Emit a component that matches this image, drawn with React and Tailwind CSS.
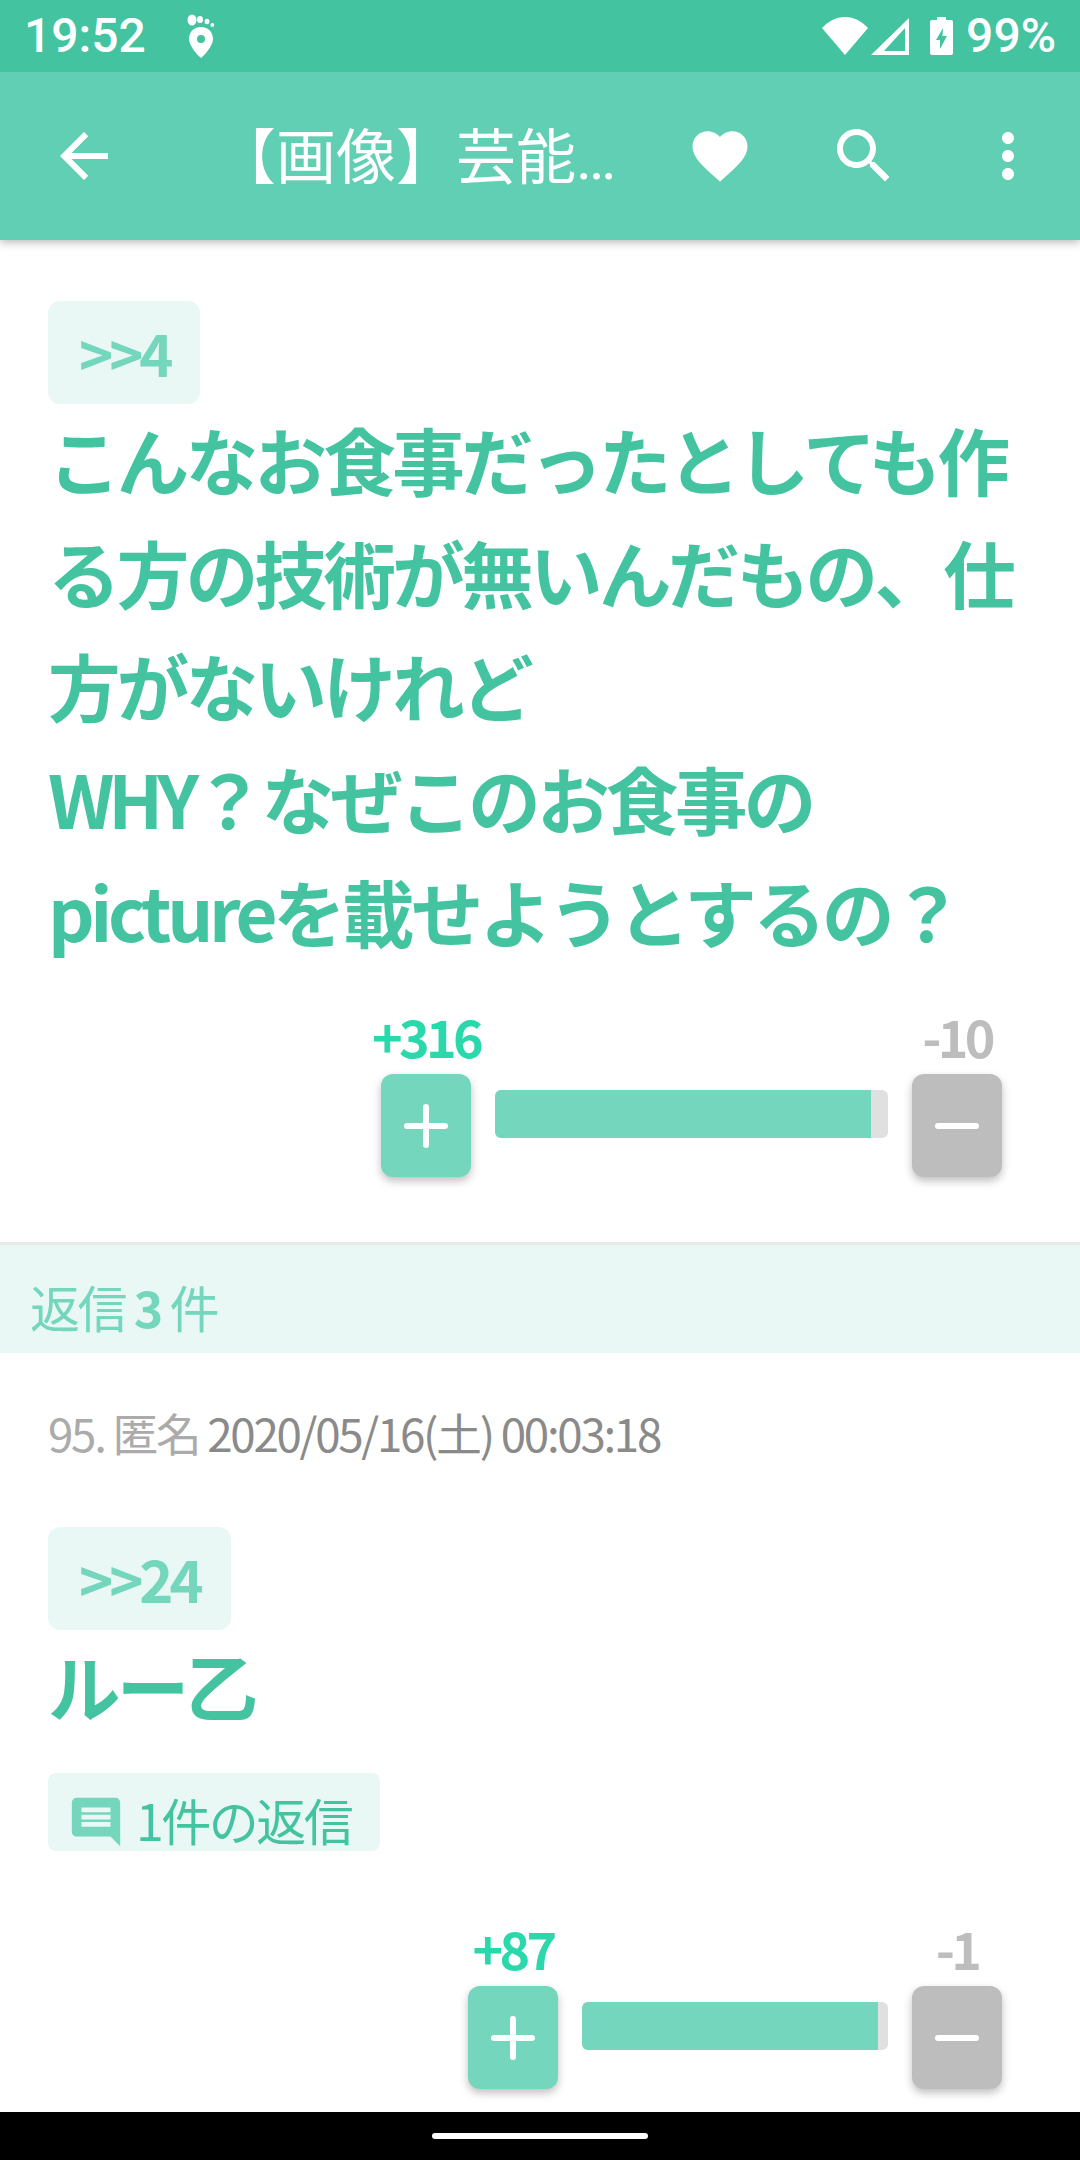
const JP = "font-['Noto_Sans_CJK_JP','Noto_Sans',sans-serif]";

function Badge({ children }) {
  return (
    <div className="inline-flex h-[103px] items-center rounded-xl bg-[#e9f8f4] px-[31px] pb-[2px] text-[58px] font-bold leading-none tracking-[-0.07em] text-[#73d6bd]">
      {children}
    </div>
  );
}

function PlusIcon() {
  return (
    <svg width="44" height="44" viewBox="0 0 44 44" stroke="white" strokeWidth="6" strokeLinecap="round">
      <path d="M3 22H41M22 3V41" />
    </svg>
  );
}

function MinusIcon() {
  return (
    <svg width="44" height="44" viewBox="0 0 44 44" stroke="white" strokeWidth="6" strokeLinecap="round">
      <path d="M3 22H41" />
    </svg>
  );
}

function Votes({ up, down, barWidth, fill, className }) {
  return (
    <div className={`flex justify-end gap-6 pr-[78px] ${className}`}>
      <div className="flex w-[90px] flex-col items-center">
        <div className="h-[62px] whitespace-nowrap text-[52px] font-bold leading-[48px] tracking-[-0.07em] text-[#2ad8ab]">{up}</div>
        <div className="flex h-[103px] w-[90px] items-center justify-center rounded-xl bg-[#73d6bd] shadow-[0_4px_8px_rgba(0,0,0,0.25)]">
          <PlusIcon />
        </div>
      </div>
      <div className="mt-[78px] h-12 overflow-hidden rounded-md bg-[#e0e0e0]" style={{ width: barWidth }}>
        <div className="h-full bg-[#73d6bd]" style={{ width: fill }} />
      </div>
      <div className="flex w-[90px] flex-col items-center">
        <div className="h-[62px] whitespace-nowrap text-[52px] font-bold leading-[48px] tracking-[-0.07em] text-[#bdbdbd]">{down}</div>
        <div className="flex h-[103px] w-[90px] items-center justify-center rounded-xl bg-[#bdbdbd] shadow-[0_4px_8px_rgba(0,0,0,0.25)]">
          <MinusIcon />
        </div>
      </div>
    </div>
  );
}

export default function App() {
  return (
    <div className={`flex h-[2160px] w-[1080px] flex-col overflow-hidden bg-white ${JP}`}>
      {/* status bar */}
      <div className="relative z-20 flex h-[72px] shrink-0 items-center bg-[#43c3a0] pl-[24px] pr-[24px] text-white">
        <span className="font-['Roboto'] text-[48px] font-medium leading-none">19:52</span>
        <svg className="ml-[41px]" width="28" height="44" viewBox="0 0 28 44" fill="white">
          <ellipse cx="5" cy="6" rx="4.5" ry="5.5" />
          <ellipse cx="13" cy="5.500" rx="3" ry="3.500" />
          <ellipse cx="20" cy="7.500" rx="2.400" ry="2.800" />
          <circle cx="25.300" cy="11" r="1.900" />
          <path fillRule="evenodd" d="M14 13C6.500 13 2 18.500 2 25c0 6 7 15 12 19 5-4 12-13 12-19 0-6.500-4.500-12-12-12zm0 8a4 4 0 110 8 4 4 0 010-8z" />
        </svg>
        <svg className="ml-auto" width="46" height="38" viewBox="0 0 46 38" fill="white">
          <path d="M0 11C6 4.500 14 0 23 0s17 4.500 23 11L23 38z" />
        </svg>
        <svg className="ml-[3px]" width="38" height="37" viewBox="0 0 38 37" fill="white">
          <path fillRule="evenodd" d="M38 0V37H0zM34 10 13 33H34z" />
        </svg>
        <svg className="ml-[21px]" width="23" height="38" viewBox="0 0 23 38" fill="white">
          <path fillRule="evenodd" d="M7 0h9v3h5a2 2 0 012 2v31a2 2 0 01-2 2H2a2 2 0 01-2-2V5a2 2 0 012-2h5zM13 11 6 23h4v9l7-13h-4.500z" />
        </svg>
        <span className="ml-[13px] font-['Roboto'] text-[48px] font-medium leading-none">99%</span>
      </div>

      {/* app bar */}
      <div className="relative z-10 flex h-[168px] shrink-0 items-center bg-[#60cfb3] pl-12 pr-9 shadow-[0_3px_8px_rgba(0,0,0,0.25)]">
        <svg width="72" height="72" viewBox="0 0 24 24" fill="white">
          <path d="M20 11H7.830l5.590-5.590L12 4l-8 8 8 8 1.410-1.410L7.830 13H20v-2z" />
        </svg>
        <div className="ml-[96px] flex-1 whitespace-nowrap text-[60px] leading-none text-white">
          【画像】芸能<span className="font-['Roboto']">…</span>
        </div>
        <svg width="66" height="66" viewBox="0 0 24 24" fill="white">
          <path d="M12 21.350l-1.450-1.320C5.400 15.360 2 12.280 2 8.500 2 5.420 4.420 3 7.500 3c1.740 0 3.410.81 4.500 2.090C13.090 3.810 14.760 3 16.500 3 19.580 3 22 5.420 22 8.500c0 3.780-3.400 6.860-8.550 11.540L12 21.350z" />
        </svg>
        <svg className="ml-[75px]" width="72" height="72" viewBox="0 0 24 24" fill="white">
          <path d="M15.500 14h-.79l-.28-.27C15.410 12.590 16 11.110 16 9.500 16 5.910 13.090 3 9.500 3S3 5.910 3 9.500 5.910 16 9.500 16c1.610 0 3.090-.59 4.230-1.570l.27.28v.79l5 4.990L20.490 19l-4.990-5zm-6 0C7.010 14 5 11.990 5 9.500S7.010 5 9.500 5 14 7.010 14 9.500 11.990 14 9.500 14z" />
        </svg>
        <svg className="ml-[72px]" width="72" height="72" viewBox="0 0 24 24" fill="white">
          <path d="M12 8c1.100 0 2-.9 2-2s-.9-2-2-2-2 .9-2 2 .9 2 2 2zm0 2c-1.100 0-2 .9-2 2s.9 2 2 2 2-.9 2-2-.9-2-2-2zm0 6c-1.100 0-2 .9-2 2s.9 2 2 2 2-.9 2-2-.9-2-2-2z" />
        </svg>
      </div>

      {/* content */}
      <div className="flex-1 overflow-hidden">
        <div className="px-12 pt-[61px]">
          <Badge>&gt;&gt;4</Badge>
          <p className="-mt-[2px] w-[1000px] text-[72.500px] font-bold leading-[113px] tracking-[-0.05em] text-[#43c3a0]">
            こんなお食事だったとしても作
            <br />
            る方の技術が無いんだもの、仕
            <br />
            方がないけれど
            <br />
            <span className="tracking-[-0.085em]">WHY</span>？なぜこのお食事の
            <br />
            <span className="tracking-[-0.06em]">picture</span>を載せようとするの？
          </p>
        </div>
        <Votes up="+316" down="-10" barWidth={393} fill={376} className="mt-[45px]" />

        <div className="mt-[65px] flex h-[111px] items-center border-t-[3px] border-[#e5e9e8] bg-[#e9f8f4] pl-[30px] pt-[14px] text-[50px] tracking-[-0.05em] text-[#73d6bd]">
          返信&nbsp;<span className="font-bold">3</span>&nbsp;件
        </div>

        <div className="px-12">
          <div className="pb-[65px] pt-[49px] text-[45.700px] leading-[60px] tracking-[-0.05em] text-[#8a8a8a]">
            <span className="text-[#ababab]">95. 匿名 </span>2020/05/16(土) 00:03:18
          </div>
          <Badge>&gt;&gt;24</Badge>
          <p className="-mt-[2px] text-[72.500px] font-bold leading-[113px] tracking-[-0.05em] text-[#43c3a0]">ルー乙</p>
          <div className="mt-[32px] flex h-[78px] w-[332px] items-start rounded-lg bg-[#e9f8f4] pl-[19px] pt-[17px] text-[50px] leading-[58px] tracking-[-0.05em] text-[#43c3a0]">
            <svg width="58" height="58" viewBox="0 0 24 24" fill="#73d6bd" className="-scale-x-100 translate-y-[3px]">
              <path d="M20 2H4c-1.100 0-1.990.9-1.990 2L2 22l4-4h14c1.100 0 2-.9 2-2V4c0-1.100-.9-2-2-2zm-2 12H6v-2h12v2zm0-3H6V9h12v2zm0-3H6V6h12v2z" />
            </svg>
            <span className="ml-[11px] whitespace-nowrap">1件の返信</span>
          </div>
        </div>
        <Votes up="+87" down="-1" barWidth={306} fill={296} className="mt-[73px]" />
      </div>

      {/* navigation bar */}
      <div className="flex h-12 shrink-0 items-center justify-center bg-black">
        <div className="h-[6px] w-[216px] rounded-full bg-white" />
      </div>
    </div>
  );
}
